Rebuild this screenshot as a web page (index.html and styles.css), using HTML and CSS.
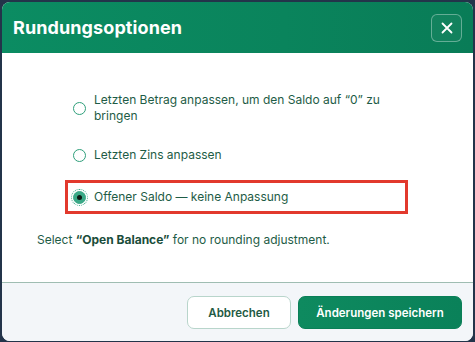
FILE: index.html
```html
<!DOCTYPE html>
<html lang="de">
<head>
<meta charset="utf-8">
<link rel="stylesheet" href="styles.css">
<title>Rundungsoptionen</title>
</head>
<body>
<div class="dialog">
  <header class="dialog-header">
    <h1 class="dialog-title">Rundungsoptionen</h1>
    <button class="close-btn" aria-label="Schließen">
      <svg width="14" height="14" viewBox="0 0 14 14"><path d="M2.5 2.5 L11.5 11.5 M11.5 2.5 L2.5 11.5" stroke="#fff" stroke-width="1.8" stroke-linecap="round"/></svg>
    </button>
  </header>
  <main class="dialog-body">
    <div class="options">
      <label class="option">
        <span class="radio"></span>
        <span class="option-text">Letzten Betrag anpassen, um den Saldo auf “0” zu bringen</span>
      </label>
      <label class="option">
        <span class="radio"></span>
        <span class="option-text">Letzten Zins anpassen</span>
      </label>
      <label class="option option-selected">
        <span class="radio radio-checked"><span class="radio-dot"></span></span>
        <span class="option-text">Offener Saldo — keine Anpassung</span>
      </label>
    </div>
    <p class="hint">Select <strong>“Open Balance”</strong> for no rounding adjustment.</p>
  </main>
  <footer class="dialog-footer">
    <button class="btn btn-secondary">Abbrechen</button>
    <button class="btn btn-primary">Änderungen speichern</button>
  </footer>
</div>
</body>
</html>
```

FILE: styles.css
```css
* { box-sizing: border-box; }
html, body {
  margin: 0;
  padding: 0;
  width: 475px;
  height: 342px;
  overflow: hidden;
}
body {
  background: #23344a;
  font-family: Inter, "Noto Sans", "Liberation Sans", sans-serif;
  padding: 2px 2px 1px 2px;
}
.dialog {
  width: 471px;
  height: 339px;
  background: #ffffff;
  border-radius: 8px;
  overflow: hidden;
  display: flex;
  flex-direction: column;
}
.dialog-header {
  height: 51px;
  flex: none;
  background: linear-gradient(90deg, #0b8c62 0%, #0a845c 60%, #097c57 100%);
  display: flex;
  align-items: center;
  justify-content: space-between;
  padding: 0 11px 0 11px;
}
.dialog-title {
  margin: 0;
  color: #ffffff;
  font-size: 18px;
  font-weight: 700;
  letter-spacing: 0.1px;
}
.close-btn {
  width: 31px;
  height: 28px;
  border: 1px solid rgba(255,255,255,0.35);
  border-radius: 6px;
  background: rgba(255,255,255,0.04);
  display: flex;
  align-items: center;
  justify-content: center;
  padding: 0;
  margin-top: 1px;
}
.dialog-body {
  flex: 1;
  padding: 36px 20px 0 35px;
  color: #1f5a44;
}
.options {
  margin-left: 29px;
  width: 341px;
  display: flex;
  flex-direction: column;
  gap: 17px;
}
.option {
  display: flex;
  align-items: flex-start;
  gap: 8px;
  padding: 3px 7px;
  font-size: 12px;
  line-height: 16px;
  color: #1e5c46;
}
.option-selected {
  outline: 3px solid #e2392d;
  outline-offset: 0;
  padding: 6px 7px 6px 5px;
  margin: 0 2px;
}
.radio {
  flex: none;
  width: 13px;
  height: 13px;
  margin-top: 10px;
  border: 1.5px solid #2f9f7b;
  border-radius: 50%;
  display: flex;
  align-items: center;
  justify-content: center;
}
.option:nth-child(2) .radio,
.option-selected .radio { margin-top: 1.5px; }
.radio-checked {
  background: #3aa987;
  border-color: #3aa987;
  box-shadow: 0 0 0 1px #fff;
  outline: 1.5px dotted #3aa987;
  outline-offset: 1.5px;
}
.radio-dot {
  width: 5px;
  height: 5px;
  border-radius: 50%;
  background: #0c1a14;
}
.hint {
  margin: 21px 0 0 0;
  font-size: 12px;
  color: #1e5c46;
}
.hint strong { font-weight: 700; color: #1a4d3a; }
.dialog-footer {
  flex: none;
  height: 59px;
  border-top: 1px solid #9fbdb2;
  background: #f3f6f9;
  display: flex;
  justify-content: flex-end;
  align-items: flex-start;
  gap: 7px;
  padding: 13px 11px 0 0;
}
.btn {
  height: 33px;
  border-radius: 7px;
  font-family: inherit;
  font-size: 11.5px;
  font-weight: 600;
  cursor: pointer;
}
.btn-secondary {
  width: 104px;
  background: #ffffff;
  border: 1px solid #b8d5cb;
  color: #1f5a44;
}
.btn-primary {
  width: 164px;
  background: linear-gradient(90deg, #0e8a5f, #0a8159);
  border: 1px solid #0a7f57;
  color: #ffffff;
}
```
